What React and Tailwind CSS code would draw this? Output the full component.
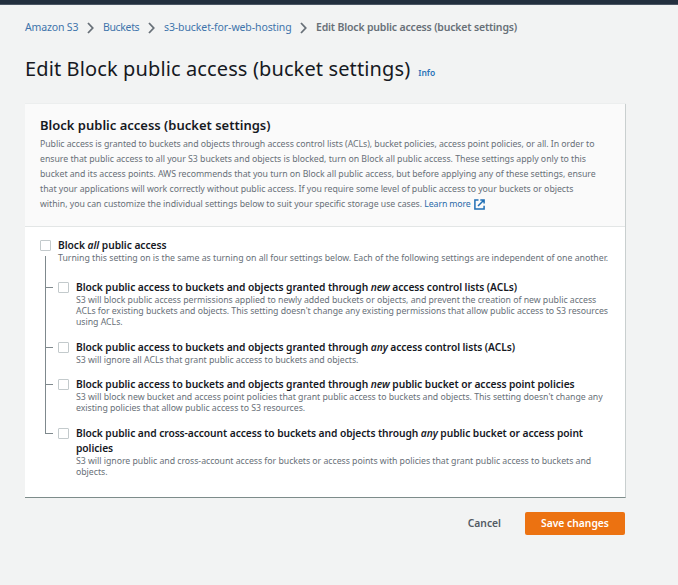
import React from 'react';

function Chevron() {
  return (
    <svg className="mx-[9px] mt-[2px] h-[12px] w-[7px] shrink-0" viewBox="0 0 7 12" fill="none" stroke="#687078" strokeWidth="1.8">
      <path d="M1 1l4.7 5L1 11" />
    </svg>
  );
}

function Checkbox() {
  return <span className="mt-[2px] h-[11px] w-[11px] shrink-0 rounded-[1px] border border-[#c3cacc] bg-white" />;
}

function Setting({ title, lines, className }) {
  return (
    <div className={'flex ' + className}>
      <span className="mt-[7px] h-px w-[8px] shrink-0 bg-[#7f898d]" />
      <span className="w-[5px] shrink-0" />
      <Checkbox />
      <div className="ml-[7px]">
        <div className="text-[10.25px] leading-[15px] font-semibold tracking-[-0.075px] whitespace-nowrap text-[#16191f]">{title}</div>
        <div className="text-[8.75px] leading-[11px] tracking-[-0.035px] whitespace-nowrap text-[#687078]">
          {lines.map((line) => (
            <div key={line}>{line}</div>
          ))}
        </div>
      </div>
    </div>
  );
}

export default function App() {
  return (
    <div className="h-[585px] w-[678px] overflow-hidden bg-[#f2f3f3] font-['Noto_Sans','Open_Sans',sans-serif]">
      <div className="h-[5px] border-b border-[#4a5563] bg-[#232f3e]" />
      <div className="ml-[25px] w-[601px]">
        <nav className="mt-[14px] flex h-[16px] items-center text-[10.5px] leading-[16px] whitespace-nowrap text-[#3e73ab]">
          <span className="w-[53px] tracking-[-0.15px]">Amazon S3</span>
          <Chevron />
          <span className="w-[36px] tracking-[-0.35px]">Buckets</span>
          <Chevron />
          <span className="w-[127px] tracking-[-0.1px]">s3-bucket-for-web-hosting</span>
          <Chevron />
          <span className="font-semibold tracking-[-0.18px] text-[#687078]">Edit Block public access (bucket settings)</span>
        </nav>
        <div className="mt-[20px] flex h-[28px] items-baseline whitespace-nowrap">
          <h1 className="text-[20px] leading-[28px] tracking-[0.12px] text-[#16191f]">Edit Block public access (bucket settings)</h1>
          <span className="ml-[8px] text-[8.5px] font-semibold text-[#2b74b8]">Info</span>
        </div>
        <section className="mt-[21px] h-[394px] border-r border-b border-r-[#c9cfcf] border-b-[#7d8c8a] bg-white shadow-[0_-1px_0_#eceeee]">
          <header className="h-[123px] border-b border-[#e3e6e6] bg-[#fafafa] pt-[11px] pl-[15px]">
            <h2 className="text-[13px] leading-[20px] font-semibold whitespace-nowrap text-[#16191f]">Block public access (bucket settings)</h2>
            <div className="mt-[2px] text-[8.75px] leading-[15px] tracking-[-0.03px] whitespace-nowrap text-[#687078]">
              <div className="tracking-[-0.045px]">Public access is granted to buckets and objects through access control lists (ACLs), bucket policies, access point policies, or all. In order to</div>
              <div className="tracking-[-0.025px]">ensure that public access to all your S3 buckets and objects is blocked, turn on Block all public access. These settings apply only to this</div>
              <div className="tracking-[-0.04px]">bucket and its access points. AWS recommends that you turn on Block all public access, but before applying any of these settings, ensure</div>
              <div>that your applications will work correctly without public access. If you require some level of public access to your buckets or objects</div>
              <div className="flex items-center">
                <span>within, you can customize the individual settings below to suit your specific storage use cases.&nbsp;</span>
                <span className="tracking-[-0.13px] text-[#2b6aa8]">Learn more</span>
                <svg className="ml-[3px] h-[11px] w-[11px]" viewBox="0 0 11 11" fill="none" stroke="#1f6fb5" strokeWidth="1.5">
                  <path d="M4.5 .9H.9v9.2h9.2V6.7M6.3 .9h3.8v3.6M10 1L4 7" />
                </svg>
              </div>
            </div>
          </header>
          <div className="relative pt-[11px] pl-[15px]">
            <div className="flex">
              <Checkbox />
              <div className="ml-[7px] whitespace-nowrap">
                <div className="text-[10.25px] leading-[15px] font-semibold tracking-[-0.05px] text-[#16191f]">Block <em>all</em> public access</div>
                <div className="text-[8.75px] leading-[11px] tracking-[-0.015px] text-[#687078]">Turning this setting on is the same as turning on all four settings below. Each of the following settings are independent of one another.</div>
              </div>
            </div>
            <span className="absolute top-[29px] left-[20px] h-[178px] w-px bg-[#7f898d]" />
            <div className="pl-[5px]">
              <Setting
                className="mt-[16px]"
                title={<>Block public access to buckets and objects granted through <em>new</em> access control lists (ACLs)</>}
                lines={[
                  'S3 will block public access permissions applied to newly added buckets or objects, and prevent the creation of new public access',
                  "ACLs for existing buckets and objects. This setting doesn't change any existing permissions that allow public access to S3 resources",
                  'using ACLs.',
                ]}
              />
              <Setting
                className="mt-[12px]"
                title={<>Block public access to buckets and objects granted through <em>any</em> access control lists (ACLs)</>}
                lines={['S3 will ignore all ACLs that grant public access to buckets and objects.']}
              />
              <Setting
                className="mt-[11px]"
                title={<>Block public access to buckets and objects granted through <em>new</em> public bucket or access point policies</>}
                lines={[
                  "S3 will block new bucket and access point policies that grant public access to buckets and objects. This setting doesn't change any",
                  'existing policies that allow public access to S3 resources.',
                ]}
              />
              <Setting
                className="mt-[12px]"
                title={<>Block public and cross-account access to buckets and objects through <em>any</em> public bucket or access point<br />policies</>}
                lines={[
                  'S3 will ignore public and cross-account access for buckets or access points with policies that grant public access to buckets and',
                  'objects.',
                ]}
              />
            </div>
          </div>
        </section>
        <div className="mt-[14px] mr-[1px] flex h-[23px] items-center justify-end text-[10.3px] font-semibold">
          <button className="mr-[24px] text-[#545b64]">Cancel</button>
          <button className="h-[23px] w-[100px] rounded-[2px] bg-[#ec7211] text-white">Save changes</button>
        </div>
      </div>
    </div>
  );
}
